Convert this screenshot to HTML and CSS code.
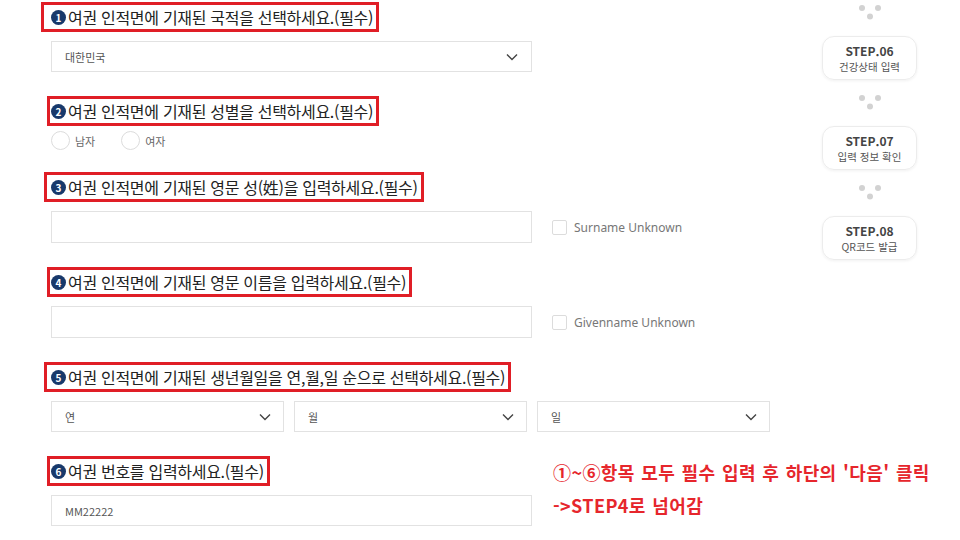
FILE: index.html
```html
<!DOCTYPE html>
<html lang="ko">
<head>
  <meta charset="UTF-8" />
  <meta name="viewport" content="width=device-width, initial-scale=1.0" />
  <title>여권 정보 입력</title>
  <link rel="stylesheet" href="styles.css">
</head>
<body>
  <div class="page">
    <div class="form">
      <div class="field">
        <div class="mark mark-wide"><span class="num">1</span>여권 인적면에 기재된 국적을 선택하세요.(필수)</div>
        <div class="select select-full">
          <span>대한민국</span>
          <svg class="chev" width="12" height="8" viewBox="0 0 12 8"><path d="M1 1.5 L6 6.5 L11 1.5" fill="none" stroke="#444" stroke-width="1.4"/></svg>
        </div>
      </div>

      <div class="field field-radio">
        <div class="mark"><span class="num">2</span>여권 인적면에 기재된 성별을 선택하세요.(필수)</div>
        <div class="radios">
          <label class="radio"><span class="circle"></span>남자</label>
          <label class="radio"><span class="circle"></span>여자</label>
        </div>
      </div>

      <div class="field">
        <div class="mark mark-mid"><span class="num">3</span>여권 인적면에 기재된 영문 성(姓)을 입력하세요.(필수)</div>
        <div class="row">
          <div class="input"></div>
          <label class="check"><span class="box"></span>Surname Unknown</label>
        </div>
      </div>

      <div class="field">
        <div class="mark"><span class="num">4</span>여권 인적면에 기재된 영문 이름을 입력하세요.(필수)</div>
        <div class="row">
          <div class="input"></div>
          <label class="check"><span class="box"></span>Givenname Unknown</label>
        </div>
      </div>

      <div class="field">
        <div class="mark mark-mid"><span class="num">5</span>여권 인적면에 기재된 생년월일을 연,월,일 순으로 선택하세요.(필수)</div>
        <div class="dates">
          <div class="select"><span>연</span><svg class="chev" width="12" height="8" viewBox="0 0 12 8"><path d="M1 1.5 L6 6.5 L11 1.5" fill="none" stroke="#444" stroke-width="1.4"/></svg></div>
          <div class="select"><span>월</span><svg class="chev" width="12" height="8" viewBox="0 0 12 8"><path d="M1 1.5 L6 6.5 L11 1.5" fill="none" stroke="#444" stroke-width="1.4"/></svg></div>
          <div class="select"><span>일</span><svg class="chev" width="12" height="8" viewBox="0 0 12 8"><path d="M1 1.5 L6 6.5 L11 1.5" fill="none" stroke="#444" stroke-width="1.4"/></svg></div>
        </div>
      </div>

      <div class="field field-last">
        <div class="col">
          <div class="mark"><span class="num">6</span>여권 번호를 입력하세요.(필수)</div>
          <div class="input"><span>MM22222</span></div>
        </div>
        <p class="note">①~⑥항목 모두 필수 입력 후 하단의 '다음' 클릭<br>-&gt;STEP4로 넘어감</p>
      </div>
    </div>

    <div class="steps">
      <svg class="dots" width="24" height="16" viewBox="0 0 24 16"><circle cx="4" cy="4" r="3" fill="#d2d2d2"/><circle cx="20" cy="4" r="3" fill="#d2d2d2"/><circle cx="12" cy="12.5" r="3" fill="#d2d2d2"/></svg>
      <div class="step"><strong>STEP.06</strong><span>건강상태 입력</span></div>
      <svg class="dots" width="24" height="16" viewBox="0 0 24 16"><circle cx="4" cy="4" r="3" fill="#d2d2d2"/><circle cx="20" cy="4" r="3" fill="#d2d2d2"/><circle cx="12" cy="12.5" r="3" fill="#d2d2d2"/></svg>
      <div class="step"><strong>STEP.07</strong><span>입력 정보 확인</span></div>
      <svg class="dots" width="24" height="16" viewBox="0 0 24 16"><circle cx="4" cy="4" r="3" fill="#d2d2d2"/><circle cx="20" cy="4" r="3" fill="#d2d2d2"/><circle cx="12" cy="12.5" r="3" fill="#d2d2d2"/></svg>
      <div class="step"><strong>STEP.08</strong><span>QR코드 발급</span></div>
    </div>
  </div>
</body>
</html>
```

FILE: styles.css
```css
body {
  margin: 0;
  background: #ffffff;
  font-family: "Noto Sans CJK KR", "Noto Sans", sans-serif;
  color: #222;
}
.page {
  display: flex;
  padding: 2px 0 0 51px;
}
.form {
  width: 753px;
}
.field {
  display: flex;
  flex-direction: column;
  align-items: flex-start;
  margin-bottom: 24px;
}
.field-radio {
  margin-bottom: 22px;
}
.mark {
  display: flex;
  align-items: center;
  height: 24px;
  border: 3px solid #e01e26;
  padding: 0 3px 0 1px;
  margin-left: -4px;
  margin-bottom: 9px;
  font-size: 16px;
  letter-spacing: -0.3px;
  color: #222;
  white-space: nowrap;
}
.mark-wide {
  padding-left: 7px;
  margin-left: -10px;
}
.mark-mid {
  padding-left: 4px;
  margin-left: -7px;
}
.num {
  display: inline-flex;
  align-items: center;
  justify-content: center;
  width: 15px;
  height: 15px;
  margin-right: 2px;
  border-radius: 50%;
  background: #18396b;
  color: #fff;
  font-size: 10px;
  font-weight: bold;
  letter-spacing: 0;
}
.select,
.input {
  box-sizing: border-box;
  height: 31px;
  border: 1px solid #e2e2e2;
  display: flex;
  align-items: center;
  justify-content: space-between;
  padding: 0 12px 0 13px;
  font-size: 11px;
  color: #555;
  background: #fff;
}
.select-full,
.input {
  width: 481px;
}
.select-full {
  padding-right: 13px;
}
.radios {
  display: flex;
  gap: 26px;
  margin-top: -4px;
}
.radio {
  display: flex;
  align-items: center;
  gap: 5px;
  font-size: 11px;
  color: #666;
}
.circle {
  width: 17px;
  height: 17px;
  border: 1px solid #dcdcdc;
  border-radius: 50%;
}
.row {
  display: flex;
  align-items: center;
  gap: 20px;
}
.row .input {
  height: 32px;
}
.check {
  display: flex;
  align-items: center;
  gap: 7px;
  font-family: "Noto Sans", sans-serif;
  font-size: 12px;
  color: #777;
}
.box {
  width: 13px;
  height: 13px;
  border: 1px solid #dcdcdc;
  border-radius: 2px;
}
.dates {
  display: flex;
  gap: 10px;
}
.dates .select {
  width: 233px;
}
.field-last {
  flex-direction: row;
  margin-bottom: 0;
}
.col {
  display: flex;
  flex-direction: column;
  align-items: flex-start;
}
.note {
  margin: 0 0 0 21px;
  font-size: 18px;
  line-height: 33px;
  font-weight: bold;
  color: #e6262c;
  letter-spacing: 0.4px;
  word-spacing: 1px;
  white-space: nowrap;
}
.steps {
  width: 95px;
  margin-left: 18px;
  display: flex;
  flex-direction: column;
  align-items: center;
  padding-top: 2px;
}
.dots {
  display: block;
  margin-bottom: 16px;
}
.step {
  box-sizing: border-box;
  width: 95px;
  height: 44px;
  margin-bottom: 14px;
  border: 1px solid #ececec;
  border-radius: 12px;
  box-shadow: 0 1px 3px rgba(0, 0, 0, 0.06);
  display: flex;
  flex-direction: column;
  align-items: center;
  justify-content: center;
}
.step strong {
  font-size: 12px;
  line-height: 16px;
  color: #444;
}
.step span {
  font-size: 10.5px;
  line-height: 15px;
  color: #555;
}
```
